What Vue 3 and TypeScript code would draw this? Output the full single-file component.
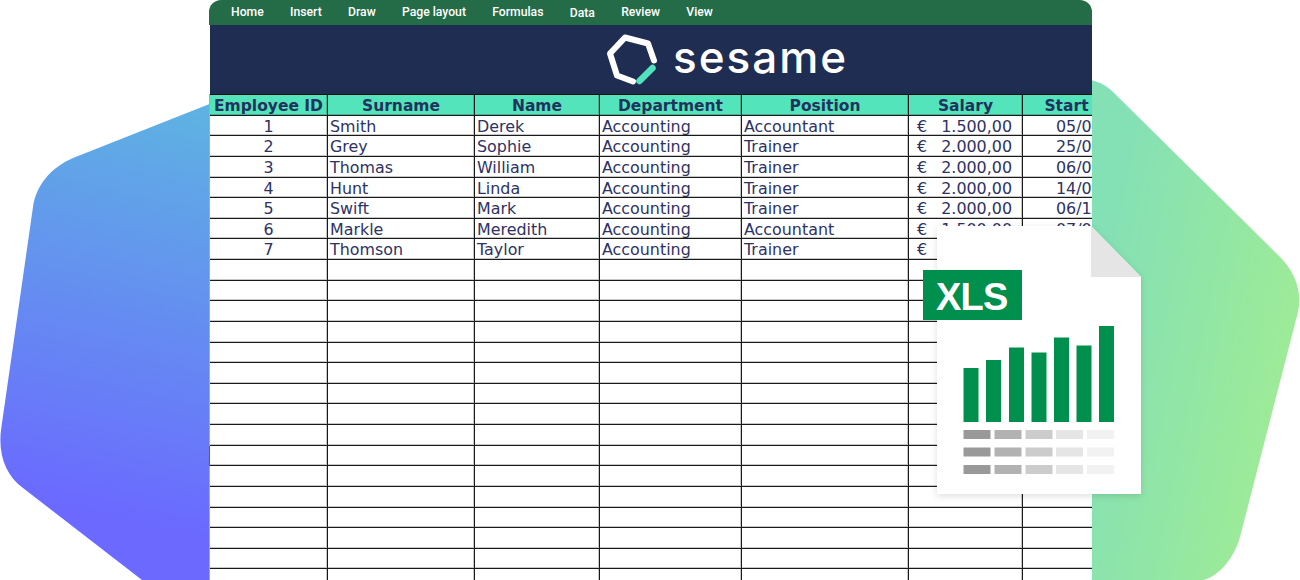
<script setup lang="ts">
interface Row { id: number; surname: string; name: string; dept: string; position: string; salary: string; start: string }

const menu: string[] = ['Home', 'Insert', 'Draw', 'Page layout', 'Formulas', 'Data', 'Review', 'View']
const headers: string[] = ['Employee ID', 'Surname', 'Name', 'Department', 'Position', 'Salary', 'Start']
const rows: Row[] = [
  { id: 1, surname: 'Smith', name: 'Derek', dept: 'Accounting', position: 'Accountant', salary: '1.500,00', start: '05/0' },
  { id: 2, surname: 'Grey', name: 'Sophie', dept: 'Accounting', position: 'Trainer', salary: '2.000,00', start: '25/0' },
  { id: 3, surname: 'Thomas', name: 'William', dept: 'Accounting', position: 'Trainer', salary: '2.000,00', start: '06/0' },
  { id: 4, surname: 'Hunt', name: 'Linda', dept: 'Accounting', position: 'Trainer', salary: '2.000,00', start: '14/0' },
  { id: 5, surname: 'Swift', name: 'Mark', dept: 'Accounting', position: 'Trainer', salary: '2.000,00', start: '06/1' },
  { id: 6, surname: 'Markle', name: 'Meredith', dept: 'Accounting', position: 'Accountant', salary: '1.500,00', start: '07/0' },
  { id: 7, surname: 'Thomson', name: 'Taylor', dept: 'Accounting', position: 'Trainer', salary: '2.000,00', start: '' },
]
const emptyRows: number[] = Array.from({ length: 16 }, (_, i) => i)

const bars: { x: number; y: number }[] = [
  { x: 963.5, y: 368 }, { x: 986, y: 360 }, { x: 1009, y: 347.5 }, { x: 1031.5, y: 352.5 },
  { x: 1054, y: 337.5 }, { x: 1076.5, y: 345.5 }, { x: 1099, y: 326 },
]
const swatches: { x: number; fill: string }[] = [
  { x: 963.5, fill: '#999999' }, { x: 994.5, fill: '#b2b2b2' }, { x: 1025.5, fill: '#cccccc' },
  { x: 1056, fill: '#e5e5e5' }, { x: 1087, fill: '#f2f2f2' },
]
const swatchRows: number[] = [430, 447.5, 465]
</script>

<template>
  <div class="page">
    <svg class="backdrop" width="1300" height="580" viewBox="0 0 1300 580">
      <defs>
        <linearGradient id="blue" gradientUnits="userSpaceOnUse" x1="205" y1="105" x2="110" y2="520">
          <stop offset="0" stop-color="#5eb3e2" />
          <stop offset="1" stop-color="#6b69ff" />
        </linearGradient>
        <linearGradient id="green" gradientUnits="userSpaceOnUse" x1="1092" y1="300" x2="1290" y2="340">
          <stop offset="0" stop-color="#84e0b5" />
          <stop offset="1" stop-color="#9deb98" />
        </linearGradient>
      </defs>
      <path fill="url(#blue)" d="M212 103 L73 158 C50 168 36 186 33 207 L1 430 C-2 455 6 476 23 488 L142 580 L212 580 Z" />
      <path fill="url(#green)" d="M1090 80 C1100 82 1107 86 1113 92 L1280 257 C1296 273 1302 292 1298 312 L1240 537 C1233 562 1215 578 1203 580 L1090 580 Z" />
    </svg>

    <section class="sheet">
      <nav class="ribbon">
        <span v-for="item in menu" :key="item" class="ribbon-item" :class="{ low: item === 'Data' }">{{ item }}</span>
      </nav>

      <header class="banner">
        <svg class="logo-mark" width="60" height="60" viewBox="0 0 60 60">
          <path d="M49 30.5 L43 13.5 L20 7.5 L5 23.5 L12 45.5 L28 51.5" fill="none" stroke="#fff" stroke-width="6" stroke-linecap="round" stroke-linejoin="round" />
          <path d="M34.5 51 L47.5 38" fill="none" stroke="#52e3bd" stroke-width="6.5" stroke-linecap="round" />
        </svg>
        <span class="logo-word">sesame</span>
      </header>

      <div class="grid">
        <div v-for="h in headers" :key="h" class="cell head">{{ h }}</div>

        <template v-for="r in rows" :key="r.id">
          <div class="cell center">{{ r.id }}</div>
          <div class="cell">{{ r.surname }}</div>
          <div class="cell">{{ r.name }}</div>
          <div class="cell">{{ r.dept }}</div>
          <div class="cell">{{ r.position }}</div>
          <div class="cell money"><span>€</span><span>{{ r.salary }}</span></div>
          <div class="cell date">{{ r.start }}</div>
        </template>

        <template v-for="n in emptyRows" :key="n">
          <div v-for="c in 7" :key="c" class="cell" :class="{ selected: n === 9 && c === 1 }"></div>
        </template>
      </div>
    </section>

    <svg class="file" width="1300" height="580" viewBox="0 0 1300 580">
      <defs>
        <filter id="soft" x="-15%" y="-15%" width="130%" height="130%">
          <feDropShadow dx="0" dy="2" stdDeviation="3.5" flood-color="#000" flood-opacity="0.13" />
        </filter>
      </defs>
      <path d="M937 226 H1091 L1141 277 V494 H937 Z" fill="#fff" filter="url(#soft)" />
      <path d="M1091 226 L1141 277 H1091 Z" fill="#e5e5e5" />
      <rect x="923" y="270" width="99" height="50" fill="#008f4c" />
      <text x="936" y="309.5" class="xls">XLS</text>
      <rect v-for="b in bars" :key="b.x" :x="b.x" :y="b.y" width="15" :height="422 - b.y" fill="#008f4c" />
      <template v-for="y in swatchRows" :key="y">
        <rect v-for="s in swatches" :key="s.x" :x="s.x" :y="y" width="27" height="9" :fill="s.fill" />
      </template>
    </svg>
  </div>
</template>

<style scoped>
.page {
  position: relative;
  width: 1300px;
  height: 580px;
  overflow: hidden;
  background: #fff;
}
.backdrop,
.file {
  position: absolute;
  left: 0;
  top: 0;
}
.sheet {
  position: relative;
  margin-left: 209px;
  width: 883px;
  height: 580px;
  overflow: hidden;
  border-radius: 12px 12px 0 0;
  background: #fff;
}
.ribbon {
  display: flex;
  align-items: center;
  gap: 26.3px;
  height: 25px;
  padding-left: 22px;
  padding-bottom: 2px;
  box-sizing: border-box;
  background: #246b47;
  color: #fff;
  font: 500 12.2px Roboto, sans-serif;
}
.ribbon-item.low {
  padding-top: 2px;
}
.banner {
  display: flex;
  align-items: center;
  gap: 8px;
  height: 69px;
  margin-left: 1px;
  padding-left: 395px;
  box-sizing: border-box;
  background: #1f2d52;
}
.logo-mark {
  flex: none;
}
.logo-word {
  color: #fff;
  font: 500 44px Inter, sans-serif;
  letter-spacing: 2px;
  line-height: 1;
  padding-bottom: 6px;
}
.grid {
  display: grid;
  grid-template-columns: 118px 147px 125px 142px 167px 114px 88px;
  grid-auto-rows: 20.63px;
  margin-left: 1px;
  border-top: 1px solid #111;
  box-shadow: -1px 0 0 #aaa;
  font: 15.9px "DejaVu Sans", sans-serif;
  color: #2e3263;
}
.cell {
  box-sizing: border-box;
  padding: 1px 0 0 2px;
  border-right: 1px solid #1a1a1a;
  border-bottom: 1px solid #1a1a1a;
  box-shadow: inset -1px -1px 0 rgba(0, 0, 0, 0.22);
  line-height: 20px;
  white-space: nowrap;
  overflow: hidden;
  background: #fff;
}
.head {
  padding-left: 0;
  text-align: center;
  background: #54e4bc;
  color: #20335c;
  font-size: 15.5px;
  font-weight: 700;
}
.center {
  padding-left: 0;
  text-align: center;
}
.money {
  display: flex;
  justify-content: space-between;
  padding: 1px 10px 0 8px;
}
.date {
  padding-left: 33px;
}
.selected {
  box-shadow: inset -1px -1px 0 rgba(0, 0, 0, 0.22), -1px 0 0 #2f7a55;
}
.xls {
  font: 700 38px "Liberation Sans", sans-serif;
  letter-spacing: -0.8px;
  fill: #fff;
}
</style>
